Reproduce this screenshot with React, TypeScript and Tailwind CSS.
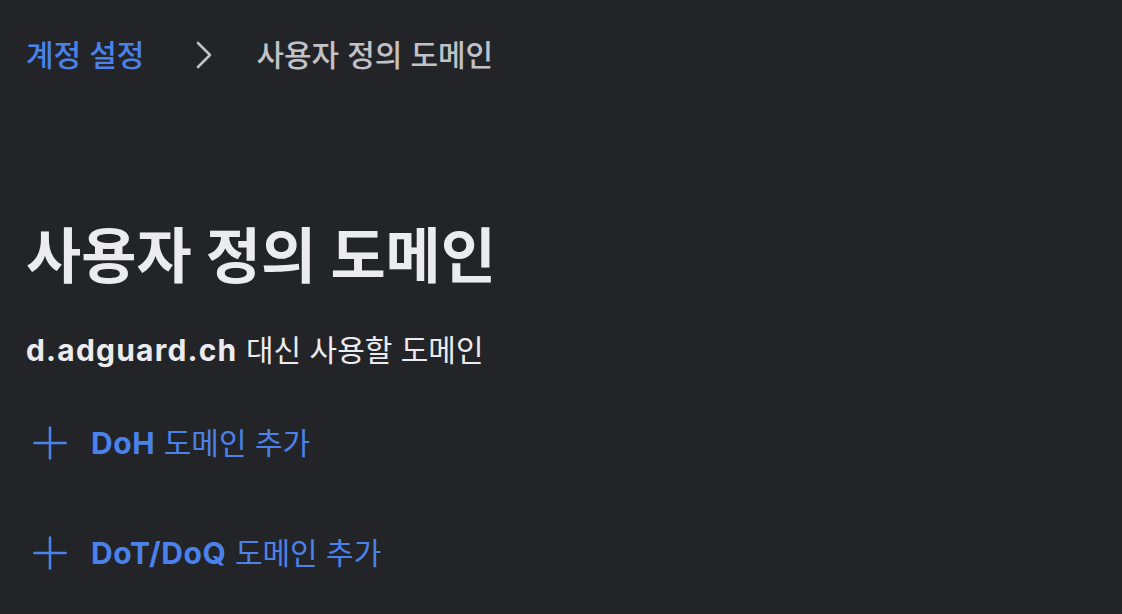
const font = { fontFamily: 'Inter, "Noto Sans CJK KR", sans-serif' };

function PlusIcon() {
  return (
    <svg width="34" height="34" viewBox="0 0 34 34" fill="none" stroke="currentColor" strokeWidth="2.6" strokeLinecap="round">
      <line x1="17" y1="1.5" x2="17" y2="32.5" />
      <line x1="1.5" y1="17" x2="32.5" y2="17" />
    </svg>
  );
}

function AddLink({ label, rest }: { label: string; rest: string }) {
  return (
    <button className="ml-[7px] flex items-center gap-[24px] text-[#4b82ea]">
      <PlusIcon />
      <span className="text-[30px] leading-none">
        <span className="font-bold tracking-[0.02em]">{label}</span> {rest}
      </span>
    </button>
  );
}

export default function App() {
  return (
    <div className="flex min-h-[614px] w-full flex-col items-start bg-[#232428] pl-[26px] pt-[37px]" style={font}>
      <nav className="flex h-[36px] items-center text-[30px] leading-[36px]">
        <span className="font-medium text-[#4b82ea]">계정 설정</span>
        <svg width="16" height="28" viewBox="0 0 16 28" fill="none" stroke="#c0c2c7" strokeWidth="2.6" strokeLinecap="round" strokeLinejoin="round" className="ml-[52px] mr-[44px]">
          <polyline points="2,2 14,14 2,26" />
        </svg>
        <span className="font-medium text-[#c0c2c7]">사용자 정의 도메인</span>
      </nav>
      <h1 className="mt-[147px] text-[60px] font-bold leading-[72px] text-[#ececf0]">사용자 정의 도메인</h1>
      <p className="mt-[40px] text-[30px] leading-[36px] text-[#ececf0]">
        <span className="font-bold tracking-[0.04em]">d.adguard.ch</span> 대신 사용할 도메인
      </p>
      <div className="mt-[58px] flex flex-col items-start gap-[76px]">
        <AddLink label="DoH" rest="도메인 추가" />
        <AddLink label="DoT/DoQ" rest="도메인 추가" />
      </div>
    </div>
  );
}
